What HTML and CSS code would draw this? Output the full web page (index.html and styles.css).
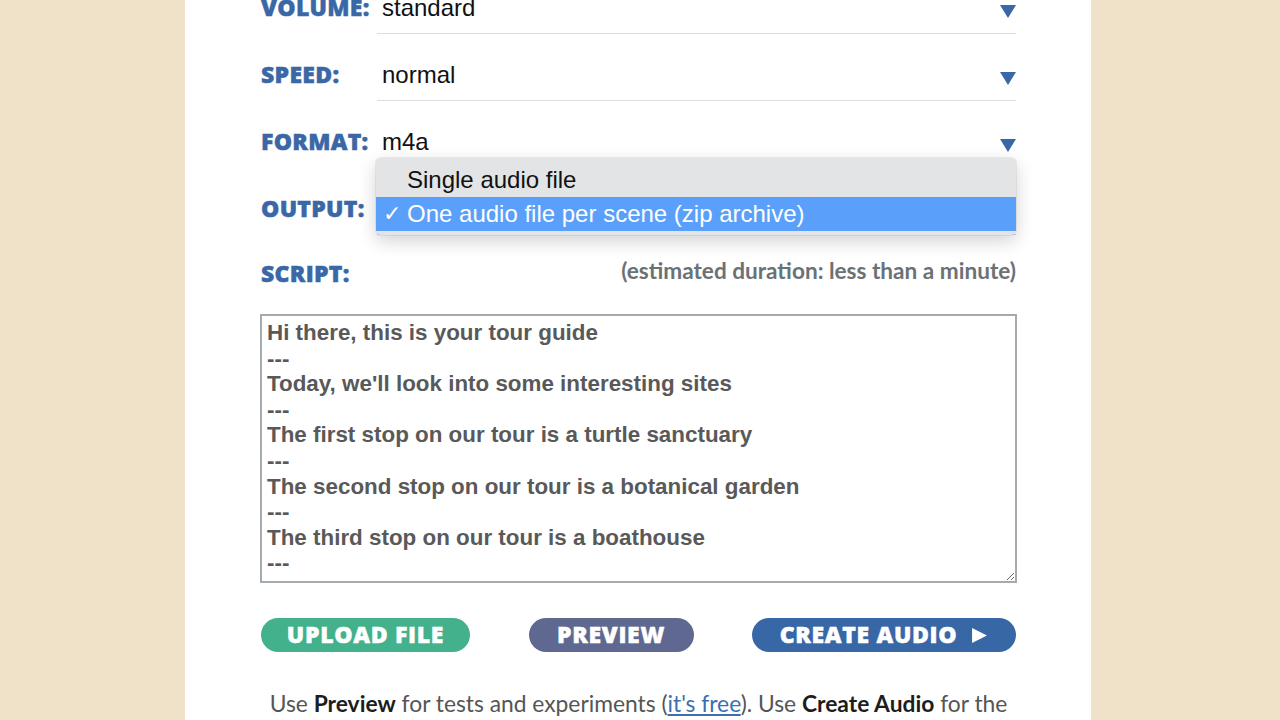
FILE: index.html
```html
<!DOCTYPE html>
<html lang="en">
<head>
    <meta charset="UTF-8">
    <meta name="viewport" content="width=device-width, initial-scale=1.0">
    <title>Create Audio</title>
    <link rel="stylesheet" href="styles.css">
</head>
<body>
    <div class="panel">
        <form class="audio-form">
            <div class="row">
                <span class="label">VOLUME:</span>
                <div class="field">
                    <span class="value">standard</span>
                    <svg class="arrow" width="16" height="13" viewBox="0 0 16 13"><path d="M0 0 H16 L8 13 Z"/></svg>
                </div>
            </div>

            <div class="row">
                <span class="label">SPEED:</span>
                <div class="field">
                    <span class="value">normal</span>
                    <svg class="arrow" width="16" height="13" viewBox="0 0 16 13"><path d="M0 0 H16 L8 13 Z"/></svg>
                </div>
            </div>

            <div class="row">
                <span class="label">FORMAT:</span>
                <div class="field">
                    <span class="value">m4a</span>
                    <svg class="arrow" width="16" height="13" viewBox="0 0 16 13"><path d="M0 0 H16 L8 13 Z"/></svg>
                </div>
            </div>

            <div class="row row-open">
                <span class="label">OUTPUT:</span>
                <div class="field">
                    <span class="value">One audio file per scene (zip archive)</span>
                </div>
                <!-- open select menu -->
                <ul class="menu">
                    <li class="option"><span class="check"></span>Single audio file</li>
                    <li class="option selected"><span class="check">✓</span>One audio file per scene (zip archive)</li>
                </ul>
            </div>

            <div class="script-head">
                <span class="label">SCRIPT:</span>
                <span class="duration">(estimated duration: less than a minute)</span>
            </div>

            <textarea class="script" spellcheck="false">Hi there, this is your tour guide
---
Today, we'll look into some interesting sites
---
The first stop on our tour is a turtle sanctuary
---
The second stop on our tour is a botanical garden
---
The third stop on our tour is a boathouse
---</textarea>

            <div class="actions">
                <button type="button" class="btn btn-upload">UPLOAD FILE</button>
                <button type="button" class="btn btn-preview">PREVIEW</button>
                <button type="button" class="btn btn-create">CREATE AUDIO <svg class="play" width="17" height="17" viewBox="0 0 16 16"><path d="M1 1 L15 8 L1 15 Z"/></svg></button>
            </div>

            <p class="note">Use <b>Preview</b> for tests and experiments (<a href="#">it's free</a>). Use <b>Create Audio</b> for the final version of your audio file.</p>
        </form>
    </div>
</body>
</html>
```

FILE: styles.css
```css
* {
    margin: 0;
    padding: 0;
    box-sizing: border-box;
}

body {
    background: #f0e2c8;
    font-family: 'Liberation Sans', Arial, sans-serif;
    overflow: hidden;
}

.panel {
    width: 906px;
    min-height: 100vh;
    margin-left: 185px;
    background: #ffffff;
    padding: 0 75px 0 76px;
}

.audio-form {
    margin-top: -12px;
}

.row {
    display: flex;
    align-items: center;
    position: relative;
}

.row + .row {
    margin-top: 21px;
}

.label {
    width: 116px;
    flex-shrink: 0;
    padding-bottom: 8px;
    font-family: 'Open Sans', sans-serif;
    font-weight: 800;
    font-size: 23px;
    letter-spacing: 0.3px;
    -webkit-text-stroke: 0.5px #3a67a5;
    color: #3a67a5;
}

.field {
    flex: 1;
    height: 46px;
    display: flex;
    align-items: center;
    padding: 0 0 6px 5px;
    border-bottom: 1px solid #dedcdc;
}

.value {
    font-size: 24px;
    color: #111;
}

.arrow {
    margin-left: auto;
    margin-top: 8px;
    fill: #3a67a5;
}

/* open dropdown */
.menu {
    position: absolute;
    left: 115px;
    right: 0;
    top: -31px;
    list-style: none;
    background: #e3e4e6;
    border-radius: 5px;
    padding: 5px 0 4px;
    box-shadow: 0 6px 18px rgba(0, 0, 0, 0.18), 0 0 0 1px rgba(0, 0, 0, 0.06);
}

.option {
    display: flex;
    align-items: center;
    height: 34px;
    padding-left: 7px;
    font-size: 24px;
    color: #111;
}

.option.selected {
    background: #5aa0fa;
    color: #ffffff;
}

.check {
    width: 24px;
    font-size: 22px;
}

.script-head {
    display: flex;
    justify-content: space-between;
    align-items: center;
    height: 32px;
    margin-top: 24px;
}

.script-head .label {
    padding-bottom: 4px;
}

.duration {
    font-family: Lato, sans-serif;
    font-weight: 700;
    font-size: 22.6px;
    color: #6b7276;
    margin-bottom: 10px;
}

.script {
    display: block;
    width: 757px;
    margin-left: -1px;
    height: 269px;
    margin-top: 23px;
    padding: 4px 5px;
    border: 2px solid #a3abb1;
    font-family: 'Liberation Sans', Arial, sans-serif;
    font-weight: 700;
    font-size: 22.4px;
    line-height: 25.6px;
    color: #595959;
    resize: both;
    overflow: hidden;
    outline: none;
}

.actions {
    display: flex;
    justify-content: space-between;
    margin-top: 35px;
}

.btn {
    height: 34px;
    display: flex;
    align-items: center;
    justify-content: center;
    padding-bottom: 3px;
    border: none;
    border-radius: 17px;
    color: #ffffff;
    font-family: 'Open Sans', sans-serif;
    font-weight: 800;
    font-size: 23px;
    letter-spacing: 0.7px;
    -webkit-text-stroke: 0.5px #ffffff;
    cursor: pointer;
}

.btn-upload {
    width: 209px;
    background: #43b18b;
}

.btn-preview {
    width: 165px;
    background: #5e6891;
}

.btn-create {
    width: 264px;
    background: #3867a6;
}

.play {
    fill: #ffffff;
    margin-left: 14px;
    margin-top: 3px;
}

.note {
    margin-top: 37px;
    text-align: center;
    font-family: Lato, sans-serif;
    font-size: 22.8px;
    line-height: 28px;
    color: #555555;
}

.note b {
    font-weight: 700;
    color: #1d1d1d;
}

.note a {
    color: #3a6fb0;
}
```
